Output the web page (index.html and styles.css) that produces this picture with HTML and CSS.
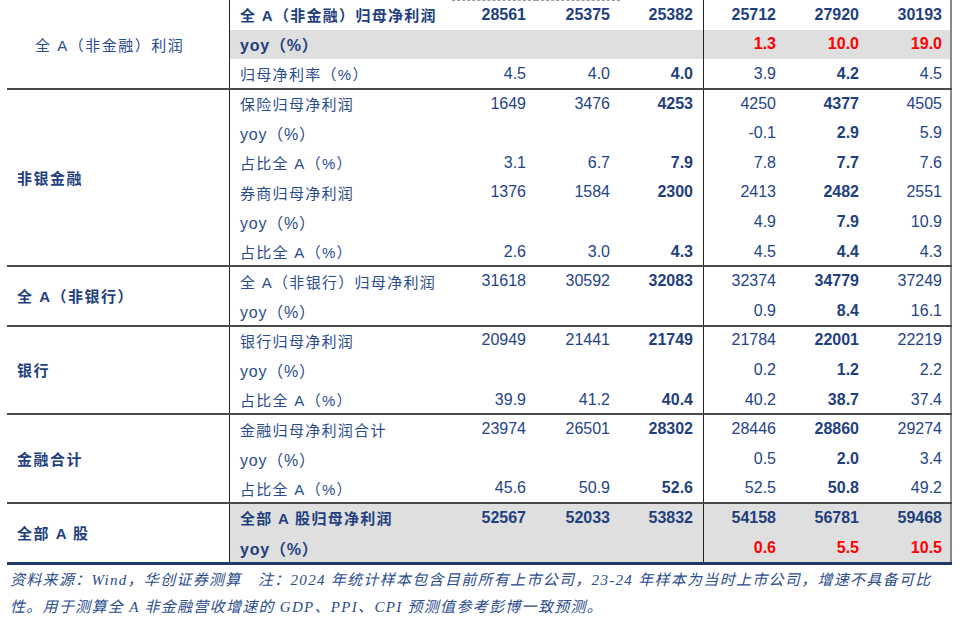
FILE: index.html
```html
<!DOCTYPE html>
<html lang="zh-CN">
<head>
<meta charset="utf-8">
<title>全A归母净利润预测</title>
<link rel="stylesheet" href="styles.css">
</head>
<body>
<div class="page">
  <div class="table">
    <div class="group r3">
      <div class="side plain">全 A（非金融）利润</div>
      <div class="rows">
        <div class="row b"><div class="lbl">全 A（非金融）归母净利润</div><div class="num dash">28561</div><div class="num dash">25375</div><div class="num">25382</div><div class="num">25712</div><div class="num">27920</div><div class="num">30193</div></div>
        <div class="row b gray"><div class="lbl yoy">yoy（%）</div><div class="num"></div><div class="num"></div><div class="num"></div><div class="num red">1.3</div><div class="num red">10.0</div><div class="num red">19.0</div></div>
        <div class="row hl"><div class="lbl">归母净利率（%）</div><div class="num">4.5</div><div class="num">4.0</div><div class="num">4.0</div><div class="num">3.9</div><div class="num">4.2</div><div class="num">4.5</div></div>
      </div>
    </div>
    <div class="group r6">
      <div class="side">非银金融</div>
      <div class="rows">
        <div class="row hl"><div class="lbl">保险归母净利润</div><div class="num">1649</div><div class="num">3476</div><div class="num">4253</div><div class="num">4250</div><div class="num">4377</div><div class="num">4505</div></div>
        <div class="row hl"><div class="lbl yoy">yoy（%）</div><div class="num"></div><div class="num"></div><div class="num"></div><div class="num">-0.1</div><div class="num">2.9</div><div class="num">5.9</div></div>
        <div class="row hl"><div class="lbl">占比全 A（%）</div><div class="num">3.1</div><div class="num">6.7</div><div class="num">7.9</div><div class="num">7.8</div><div class="num">7.7</div><div class="num">7.6</div></div>
        <div class="row hl"><div class="lbl">券商归母净利润</div><div class="num">1376</div><div class="num">1584</div><div class="num">2300</div><div class="num">2413</div><div class="num">2482</div><div class="num">2551</div></div>
        <div class="row hl"><div class="lbl yoy">yoy（%）</div><div class="num"></div><div class="num"></div><div class="num"></div><div class="num">4.9</div><div class="num">7.9</div><div class="num">10.9</div></div>
        <div class="row hl"><div class="lbl">占比全 A（%）</div><div class="num">2.6</div><div class="num">3.0</div><div class="num">4.3</div><div class="num">4.5</div><div class="num">4.4</div><div class="num">4.3</div></div>
      </div>
    </div>
    <div class="group r2">
      <div class="side">全 A（非银行）</div>
      <div class="rows">
        <div class="row hl"><div class="lbl">全 A（非银行）归母净利润</div><div class="num">31618</div><div class="num">30592</div><div class="num">32083</div><div class="num">32374</div><div class="num">34779</div><div class="num">37249</div></div>
        <div class="row hl"><div class="lbl yoy">yoy（%）</div><div class="num"></div><div class="num"></div><div class="num"></div><div class="num">0.9</div><div class="num">8.4</div><div class="num">16.1</div></div>
      </div>
    </div>
    <div class="group r3">
      <div class="side">银行</div>
      <div class="rows">
        <div class="row hl"><div class="lbl">银行归母净利润</div><div class="num">20949</div><div class="num">21441</div><div class="num">21749</div><div class="num">21784</div><div class="num">22001</div><div class="num">22219</div></div>
        <div class="row hl"><div class="lbl yoy">yoy（%）</div><div class="num"></div><div class="num"></div><div class="num"></div><div class="num">0.2</div><div class="num">1.2</div><div class="num">2.2</div></div>
        <div class="row hl"><div class="lbl">占比全 A（%）</div><div class="num">39.9</div><div class="num">41.2</div><div class="num">40.4</div><div class="num">40.2</div><div class="num">38.7</div><div class="num">37.4</div></div>
      </div>
    </div>
    <div class="group r3">
      <div class="side">金融合计</div>
      <div class="rows">
        <div class="row hl"><div class="lbl">金融归母净利润合计</div><div class="num">23974</div><div class="num">26501</div><div class="num">28302</div><div class="num">28446</div><div class="num">28860</div><div class="num">29274</div></div>
        <div class="row hl"><div class="lbl yoy">yoy（%）</div><div class="num"></div><div class="num"></div><div class="num"></div><div class="num">0.5</div><div class="num">2.0</div><div class="num">3.4</div></div>
        <div class="row hl"><div class="lbl">占比全 A（%）</div><div class="num">45.6</div><div class="num">50.9</div><div class="num">52.6</div><div class="num">52.5</div><div class="num">50.8</div><div class="num">49.2</div></div>
      </div>
    </div>
    <div class="group r2 last">
      <div class="side">全部 A 股</div>
      <div class="rows">
        <div class="row b gray"><div class="lbl">全部 A 股归母净利润</div><div class="num">52567</div><div class="num">52033</div><div class="num">53832</div><div class="num">54158</div><div class="num">56781</div><div class="num">59468</div></div>
        <div class="row b gray"><div class="lbl yoy">yoy（%）</div><div class="num"></div><div class="num"></div><div class="num"></div><div class="num red">0.6</div><div class="num red">5.5</div><div class="num red">10.5</div></div>
      </div>
    </div>
  </div>
  <p class="note">资料来源：Wind，华创证券测算　注：2024 年统计样本包含目前所有上市公司，23-24 年样本为当时上市公司，增速不具备可比性。用于测算全 A 非金融营收增速的 GDP、PPI、CPI 预测值参考彭博一致预测。</p>
</div>
</body>
</html>
```
FILE: styles.css
```css
* { box-sizing: border-box; }
html, body { margin: 0; padding: 0; background: #fff; }
body {
  font-family: "Liberation Sans", "Noto Sans CJK SC", sans-serif;
  color: #1f4488;
}
.page { width: 960px; padding-left: 7px; }
.table { width: 945px; }
.group {
  position: relative;
  display: flex;
}
.group::after {
  content: "";
  position: absolute;
  left: 0;
  right: 0;
  bottom: -1px;
  height: 2px;
  background: #4a4a4a;
  z-index: 1;
}
.group.last::after {
  bottom: -3px;
  height: 3px;
  background: #1d3a6b;
}
.group.r2 { height: 59.2px; }
.group.r3 { height: 88.8px; }
.group.r6 { height: 177.6px; }
.side {
  width: 222px;
  flex: none;
  display: flex;
  align-items: center;
  padding-left: 10px;
  font-size: 15px;
  font-weight: bold;
  letter-spacing: 1.5px;
  color: #1f3f7e;
}
.side.plain { font-weight: normal; padding-left: 28px; color: #2a4c8c; }
.rows {
  width: 723px;
  display: grid;
  grid-auto-rows: 1fr;
  border-left: 1px solid #222;
  border-right: 2px solid #888;
}
.row {
  display: grid;
  grid-template-columns: 222px 84px 84px 83px 83px 83px 81px;
  align-items: center;
}
.row.gray { background: #dfdfdf; }
.lbl {
  padding-left: 10px;
  font-size: 15px;
  letter-spacing: 1.3px;
  white-space: nowrap;
  color: #2a4c8c;
}
.lbl.yoy { font-size: 16px; letter-spacing: 0.8px; }
.num {
  padding-right: 10px;
  font-size: 16px;
  height: 100%;
  display: flex;
  align-items: center;
  justify-content: flex-end;
}
.row .num:nth-child(5) { border-left: 1px solid #222; }
.row .num:last-child { padding-right: 8px; }
.row.b .lbl, .row.b .num { font-weight: bold; color: #1f3f7e; }
.row.hl .num:nth-child(4), .row.hl .num:nth-child(6) { font-weight: bold; color: #1f3f7e; }
.num.red { color: #ff0000 !important; }
.num.dash { border-top: 1px dashed #9a9a9a; }
.note {
  margin: 5px 0 0;
  padding: 0 0 0 3px;
  width: 945px;
  font-family: "Liberation Serif", "Noto Sans CJK SC", serif;
  font-style: italic;
  font-size: 15px;
  line-height: 27px;
  letter-spacing: 1.3px;
  color: #2a4c8c;
}
```
